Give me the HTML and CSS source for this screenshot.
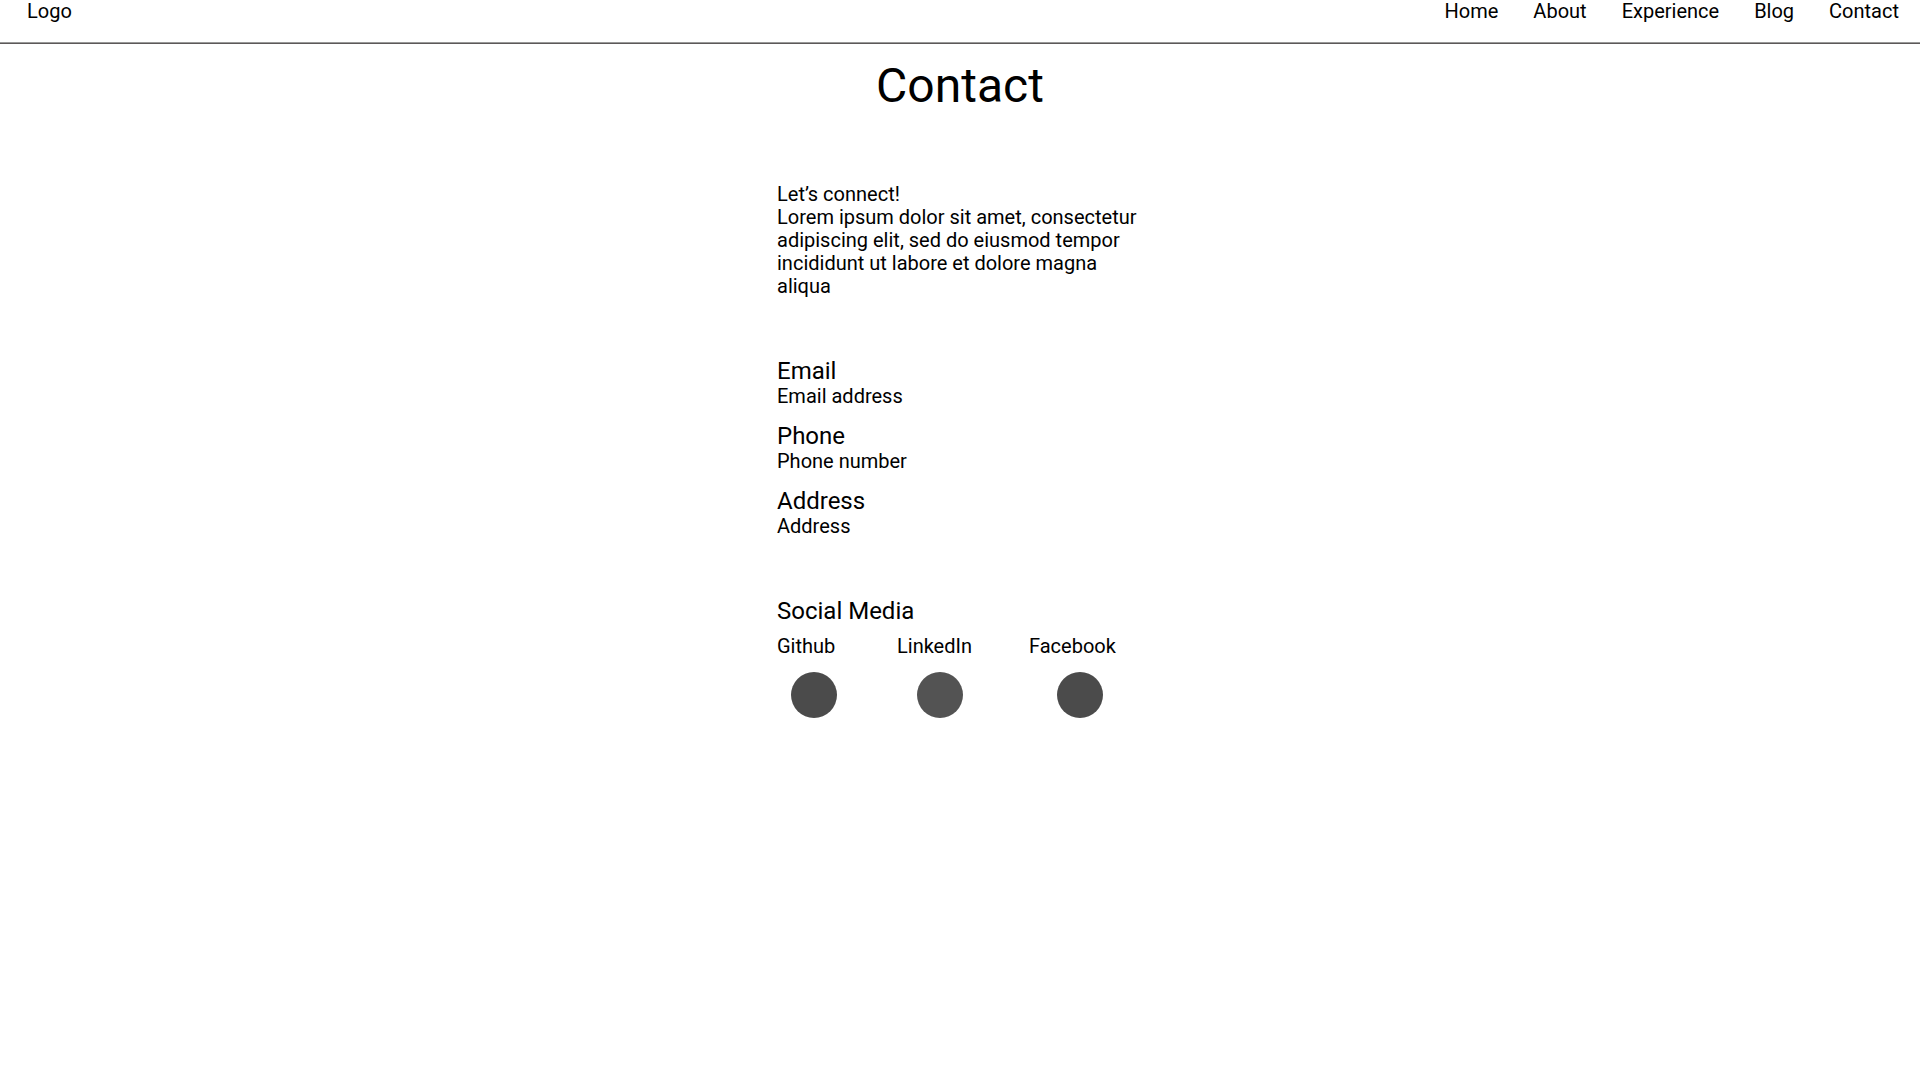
FILE: index.html
```html
<!DOCTYPE html>
<html lang="en">
<head>
  <meta charset="utf-8">
  <meta name="viewport" content="width=device-width, initial-scale=1">
  <title>Contact</title>
  <link rel="stylesheet" href="styles.css">
</head>
<body>
  <header class="site-header">
    <a class="logo" href="#">Logo</a>
    <nav class="site-nav">
      <a href="#">Home</a>
      <a href="#">About</a>
      <a href="#">Experience</a>
      <a href="#">Blog</a>
      <a href="#">Contact</a>
    </nav>
  </header>
  <main class="page">
    <h1 class="page-title">Contact</h1>
    <div class="content">
      <section class="intro">
        <p>Let’s connect!</p>
        <p>Lorem ipsum dolor sit amet, consectetur adipiscing elit, sed do eiusmod tempor incididunt ut labore et dolore magna aliqua</p>
      </section>
      <section class="details">
        <div>
          <h2>Email</h2>
          <p>Email address</p>
        </div>
        <div>
          <h2>Phone</h2>
          <p>Phone number</p>
        </div>
        <div>
          <h2>Address</h2>
          <p>Address</p>
        </div>
      </section>
      <section class="social">
        <h2>Social Media</h2>
        <div class="social-links">
          <a class="github" href="#">Github<span class="dot"></span></a>
          <a class="linkedin" href="#">LinkedIn<span class="dot"></span></a>
          <a class="facebook" href="#">Facebook<span class="dot"></span></a>
        </div>
      </section>
    </div>
  </main>
</body>
</html>
```

FILE: styles.css
```css
* {
  box-sizing: border-box;
}

body {
  margin: 0;
  background: #fff;
  color: #000;
  font-family: Roboto, sans-serif;
  font-size: 20px;
  line-height: 23px;
}

h1,
h2,
p {
  margin: 0;
  font-weight: 400;
}

a {
  color: inherit;
  text-decoration: none;
}

.site-header {
  display: flex;
  justify-content: space-between;
  padding: 0 21px 20px 27px;
  border-bottom: 1px solid #5c5859;
  box-shadow: inset 0 -1px #999;
}

.site-nav {
  display: flex;
  gap: 35px;
}

.page {
  display: flex;
  flex-direction: column;
  align-items: center;
  padding-top: 14px;
}

.page-title {
  font-size: 48px;
  line-height: 56px;
}

.content {
  display: flex;
  flex-direction: column;
  gap: 60px;
  width: 100%;
  max-width: 366px;
  padding-top: 69px;
}

.content h2 {
  font-size: 24px;
  line-height: 27px;
}

.details {
  display: flex;
  flex-direction: column;
  gap: 15px;
}

.social-links {
  display: grid;
  grid-template-columns: 120px 132px 1fr;
  padding-top: 10px;
}

.social-links a {
  display: flex;
  flex-direction: column;
  gap: 14px;
}

.dot {
  width: 46px;
  height: 46px;
  margin-left: 14px;
  border-radius: 50%;
  background: #4b4b4b;
}

.linkedin .dot {
  margin-left: 20px;
  background: #535353;
}

.facebook .dot {
  margin-left: 28px;
}
```
